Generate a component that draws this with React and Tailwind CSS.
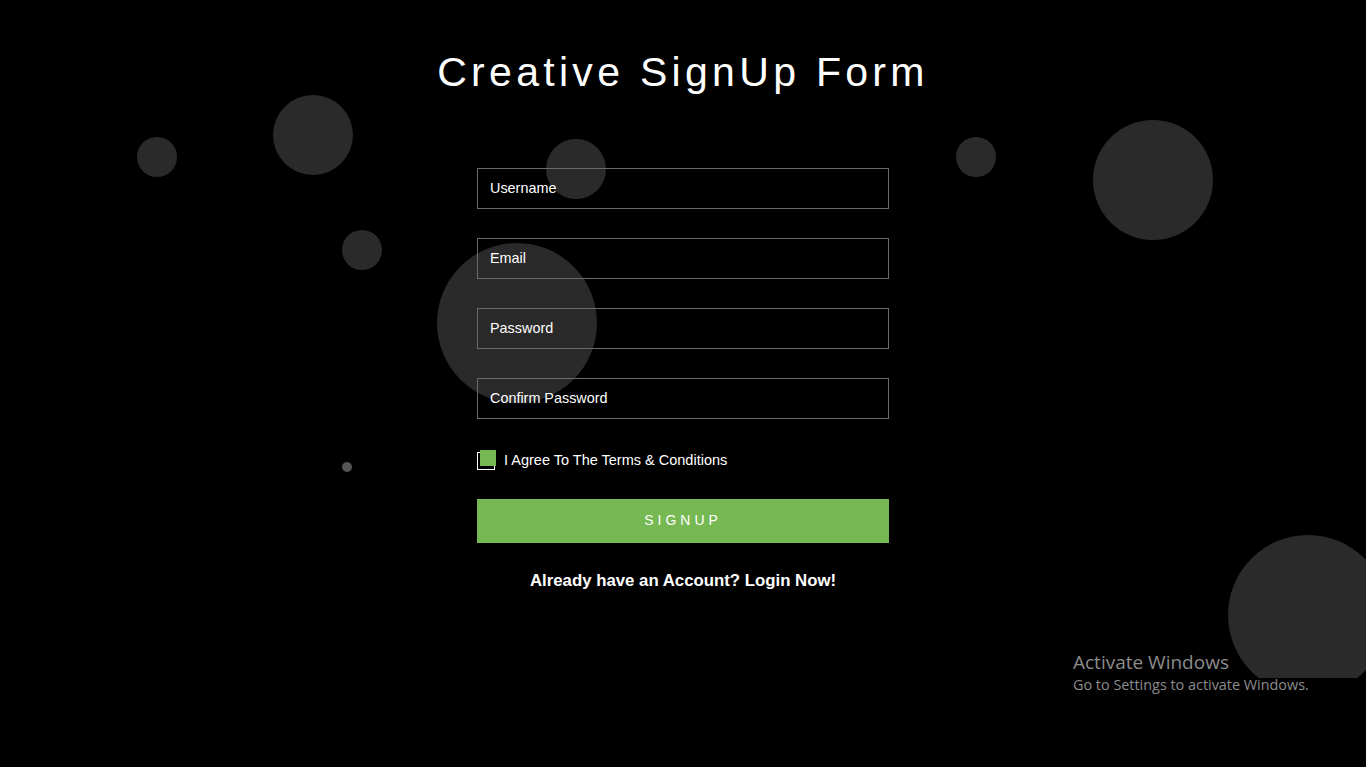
import React from 'react';

const bubbles = [
  'left-[137px] top-[137px] w-[40px] h-[40px]',
  'left-[273px] top-[95px] w-[80px] h-[80px]',
  'left-[546px] top-[139px] w-[60px] h-[60px]',
  'left-[342px] top-[230px] w-[40px] h-[40px]',
  'left-[437px] top-[243px] w-[160px] h-[160px]',
  'left-[956px] top-[137px] w-[40px] h-[40px]',
  'left-[1093px] top-[120px] w-[120px] h-[120px]',
  'left-[1228px] top-[535px] w-[160px] h-[160px]',
];

const fields = ['Username', 'Email', 'Password', 'Confirm Password'];

export default function App() {
  return (
    <div className="w-[1366px] h-[767px] bg-black overflow-hidden relative font-['Liberation_Sans',Arial,sans-serif]">
      {/* floating bubbles */}
      <div className="absolute left-0 top-0 w-full h-[678px] overflow-hidden">
        {bubbles.map((b, i) => (
          <span key={i} className={'absolute rounded-full bg-[#2a2a2a] ' + b} />
        ))}
        <span className="absolute left-[342px] top-[462px] w-[10px] h-[10px] rounded-full bg-[#555555]" />
      </div>

      <div className="relative flex flex-col items-center">
        <h1 className="mt-[48px] text-[41px] leading-[48px] tracking-[4.3px] text-white">
          Creative SignUp Form
        </h1>

        <form className="mt-[72px] w-[412px] flex flex-col" onSubmit={(e) => e.preventDefault()}>
          {fields.map((f) => (
            <input
              key={f}
              placeholder={f}
              type={f.includes('Password') ? 'password' : 'text'}
              className="h-[41px] mb-[29px] px-[12px] pb-[1px] bg-transparent border border-[#6b6b6b] text-[14.4px] text-white placeholder:text-white outline-none"
            />
          ))}

          <label className="flex items-center gap-[9px] mt-[2px] text-[14.5px] text-white">
            <span className="relative w-[18px] h-[18px] border border-white">
              <span className="absolute left-[2px] top-[-3px] w-[16px] h-[16px] bg-[#76b852]" />
            </span>
            I Agree To The Terms &amp; Conditions
          </label>

          <button
            type="submit"
            className="mt-[27px] h-[44px] bg-[#76b852] text-[14px] tracking-[4px] text-white"
          >
            SIGNUP
          </button>

          <p className="mt-[25px] text-center text-[16.8px] font-bold text-white">
            Already have an Account? Login Now!
          </p>
        </form>
      </div>

      <div className="absolute left-[1073px] top-[650px] text-[#8c8c8c] font-['Open_Sans',sans-serif]">
        <div className="text-[19px] leading-[25px]">Activate Windows</div>
        <div className="text-[14.4px] leading-[20px]">Go to Settings to activate Windows.</div>
      </div>
    </div>
  );
}
